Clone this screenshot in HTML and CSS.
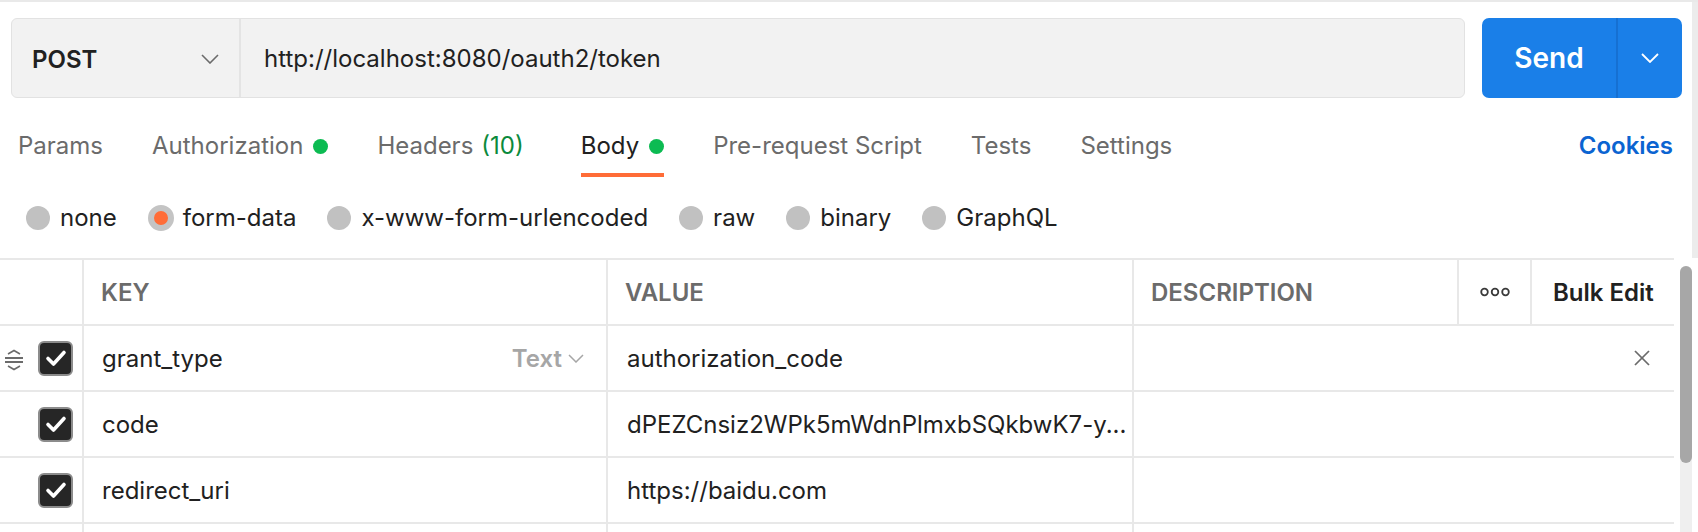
FILE: index.html
```html
<!DOCTYPE html>
<html lang="en">
<head>
<meta charset="utf-8">
<title>POST token request</title>
<link rel="stylesheet" href="styles.css">
</head>
<body>
<div class="page">
  <div class="strip"></div>
  <div class="top">
    <div class="request-row">
      <div class="url-box">
        <div class="method">
          <span class="method-name">POST</span>
          <svg class="chev" width="18" height="10" viewBox="0 0 18 10"><polyline points="1,1 9,9 17,1" fill="none" stroke="#6b6b6b" stroke-width="1.6"/></svg>
        </div>
        <div class="url">http://localhost:8080/oauth2/token</div>
      </div>
      <div class="send">
        <span class="send-label">Send</span>
        <span class="send-drop">
          <svg width="18" height="10" viewBox="0 0 18 10"><polyline points="1,1 9,9 17,1" fill="none" stroke="#ffffff" stroke-width="1.8"/></svg>
        </span>
      </div>
    </div>

    <div class="tabs">
      <div class="tab-list">
        <span class="tab">Params</span>
        <span class="tab">Authorization <i class="dot"></i></span>
        <span class="tab headers">Headers <span class="count">(10)</span></span>
        <span class="tab active">Body <i class="dot"></i></span>
        <span class="tab">Pre-request Script</span>
        <span class="tab">Tests</span>
        <span class="tab">Settings</span>
      </div>
      <span class="cookies">Cookies</span>
    </div>

    <div class="radios">
      <span class="radio-item"><i class="radio"></i>none</span>
      <span class="radio-item"><i class="radio on"></i>form-data</span>
      <span class="radio-item"><i class="radio"></i>x-www-form-urlencoded</span>
      <span class="radio-item"><i class="radio"></i>raw</span>
      <span class="radio-item"><i class="radio"></i>binary</span>
      <span class="radio-item"><i class="radio"></i>GraphQL</span>
    </div>
  </div>

  <div class="table-area">
    <div class="table">
      <div class="row head">
        <div class="cell c-check"></div>
        <div class="cell c-key">KEY</div>
        <div class="cell c-val">VALUE</div>
        <div class="cell c-desc">DESCRIPTION</div>
        <div class="cell c-more">
          <svg width="30" height="10" viewBox="0 0 30 10"><circle cx="4.5" cy="5" r="3.3" fill="none" stroke="#3a3a3a" stroke-width="1.8"/><circle cx="15" cy="5" r="3.3" fill="none" stroke="#3a3a3a" stroke-width="1.8"/><circle cx="25.5" cy="5" r="3.3" fill="none" stroke="#3a3a3a" stroke-width="1.8"/></svg>
        </div>
        <div class="cell c-bulk">Bulk Edit</div>
      </div>

      <div class="row body-row">
        <div class="cell c-check">
          <svg class="drag" width="20" height="22" viewBox="0 0 20 22"><polyline points="4,5 10,1.5 16,5" fill="none" stroke="#6b6b6b" stroke-width="1.6"/><line x1="1" y1="9" x2="19" y2="9" stroke="#6b6b6b" stroke-width="2"/><line x1="1" y1="13" x2="19" y2="13" stroke="#6b6b6b" stroke-width="2"/><polyline points="4,17 10,20.5 16,17" fill="none" stroke="#6b6b6b" stroke-width="1.6"/></svg>
          <span class="checkbox"><svg width="22" height="18" viewBox="0 0 22 18"><polyline points="3,9.5 8.5,15 19,3.5" fill="none" stroke="#ffffff" stroke-width="3.6" stroke-linecap="round" stroke-linejoin="round"/></svg></span>
        </div>
        <div class="cell c-key"><span class="k">grant_type</span><span class="type">Text <svg width="16" height="9" viewBox="0 0 16 9"><polyline points="1,1 8,8 15,1" fill="none" stroke="#a6a6a6" stroke-width="1.5"/></svg></span></div>
        <div class="cell c-val">authorization_code</div>
        <div class="cell c-rest"><svg class="x" width="16" height="16" viewBox="0 0 16 16"><line x1="1" y1="1" x2="15" y2="15" stroke="#6b6b6b" stroke-width="1.7"/><line x1="15" y1="1" x2="1" y2="15" stroke="#6b6b6b" stroke-width="1.7"/></svg></div>
      </div>

      <div class="row body-row">
        <div class="cell c-check">
          <span class="checkbox"><svg width="22" height="18" viewBox="0 0 22 18"><polyline points="3,9.5 8.5,15 19,3.5" fill="none" stroke="#ffffff" stroke-width="3.6" stroke-linecap="round" stroke-linejoin="round"/></svg></span>
        </div>
        <div class="cell c-key"><span class="k">code</span></div>
        <div class="cell c-val">dPEZCnsiz2WPk5mWdnPlmxbSQkbwK7-y...</div>
        <div class="cell c-rest"></div>
      </div>

      <div class="row body-row">
        <div class="cell c-check">
          <span class="checkbox"><svg width="22" height="18" viewBox="0 0 22 18"><polyline points="3,9.5 8.5,15 19,3.5" fill="none" stroke="#ffffff" stroke-width="3.6" stroke-linecap="round" stroke-linejoin="round"/></svg></span>
        </div>
        <div class="cell c-key"><span class="k">redirect_uri</span></div>
        <div class="cell c-val">https://baidu.com</div>
        <div class="cell c-rest"></div>
      </div>

      <div class="row body-row">
        <div class="cell c-check"></div>
        <div class="cell c-key"></div>
        <div class="cell c-val"></div>
        <div class="cell c-rest"></div>
      </div>
    </div>
    <div class="scroll">
      <div class="track"><div class="thumb"></div></div>
    </div>
  </div>
</div>
</body>
</html>
```

FILE: styles.css
```css
* { box-sizing: border-box; }

html, body {
  margin: 0;
  padding: 0;
  background: #ffffff;
  height: 532px;
  overflow: hidden;
}

body {
  font-family: Inter, "Noto Sans", "Liberation Sans", sans-serif;
  font-size: 24px;
  color: #212121;
}

.page {
  width: 1698px;
  display: flex;
  flex-direction: column;
}

.strip {
  height: 2px;
  background: #e9e9e9;
}

.top {
  border-right: 6px solid #ececec;
  height: 256px;
}

/* request bar */
.request-row {
  display: flex;
  gap: 17px;
  padding: 16px 10px 0 11px;
}

.url-box {
  flex: 1;
  height: 80px;
  display: flex;
  align-items: center;
  background: #f2f2f2;
  border: 1px solid #e2e2e2;
  border-radius: 6px;
}

.method {
  width: 229px;
  height: 100%;
  display: flex;
  align-items: center;
  justify-content: space-between;
  padding: 2px 20px 0 20px;
  border-right: 2px solid #e4e4e4;
}

.method-name {
  font-weight: 600;
  color: #212121;
}

.url {
  padding-left: 23px;
  padding-top: 1px;
  color: #212121;
}

.send {
  width: 200px;
  height: 80px;
  display: flex;
  background: #1a7fe8;
  border-radius: 7px;
  color: #ffffff;
}

.send-label {
  flex: 1;
  display: flex;
  align-items: center;
  justify-content: center;
  font-size: 28px;
  font-weight: 600;
  border-right: 2px solid #1670d2;
}

.send-drop {
  width: 64px;
  display: flex;
  align-items: center;
  justify-content: center;
}

/* tabs */
.tabs {
  display: flex;
  justify-content: space-between;
  align-items: flex-start;
  margin-top: 33px;
  padding: 0 19px 0 18px;
}

.tab-list {
  display: flex;
  gap: 49px;
}

.tab {
  display: flex;
  align-items: center;
  gap: 10px;
  height: 46px;
  line-height: 30px;
  padding-bottom: 12px;
  border-bottom: 4px solid transparent;
  color: #6b6b6b;
  white-space: nowrap;
}

.tab.headers {
  margin-right: 8px;
}

.tab.active {
  color: #212121;
  border-bottom-color: #ff6c37;
}

.dot {
  display: inline-block;
  width: 15px;
  height: 15px;
  border-radius: 50%;
  background: #0cbb52;
}

.count {
  color: #0b8a3c;
  margin-left: -2px;
}

.cookies {
  line-height: 30px;
  font-weight: 600;
  color: #0b64d1;
}

/* radios */
.radios {
  display: flex;
  gap: 31px;
  margin-top: 26px;
  padding-left: 26px;
}

.radio-item {
  display: flex;
  align-items: center;
  gap: 10px;
  line-height: 30px;
  color: #212121;
}

.radio {
  display: inline-block;
  width: 24px;
  height: 24px;
  border-radius: 50%;
  background: #c1c1c1;
}

.radio.on {
  width: 26px;
  height: 26px;
  background: #ff6c37;
  border: 6px solid #c4c4c4;
  margin-right: -1px;
}

/* table */
.table-area {
  display: flex;
}

.table {
  width: 1674px;
  border-top: 2px solid #e8e8e8;
}

.row {
  display: grid;
  height: 66px;
  border-bottom: 2px solid #e8e8e8;
}

.row.head {
  grid-template-columns: 84px 524px 526px 325px 73px 142px;
}

.row.body-row {
  grid-template-columns: 84px 524px 526px 540px;
}

.cell {
  display: flex;
  align-items: center;
  border-right: 2px solid #e8e8e8;
  padding-left: 17px;
  white-space: nowrap;
  overflow: hidden;
}

.row .cell:last-child {
  border-right: none;
}

.head .cell {
  font-size: 24px;
  font-weight: 600;
  color: #6b6b6b;
}

.head .c-more {
  padding-left: 0;
  justify-content: center;
}

.head .c-bulk {
  padding-left: 21px;
  font-size: 24px;
  color: #212121;
}

.c-check {
  padding-left: 0;
  position: relative;
}

.drag {
  position: absolute;
  left: 4px;
  top: 23px;
}

.checkbox {
  margin-left: 38px;
  width: 35px;
  height: 35px;
  border-radius: 6px;
  background: #262626;
  border: 2px solid #8c8c8c;
  display: flex;
  align-items: center;
  justify-content: center;
}

.body-row .c-key {
  padding-left: 18px;
  padding-right: 22px;
  justify-content: space-between;
}

.type {
  display: flex;
  align-items: center;
  gap: 6px;
  color: #a6a6a6;
  font-weight: 600;
}

.body-row .c-val {
  padding-left: 19px;
}

.c-rest {
  justify-content: flex-end;
  padding-right: 24px;
}

/* scrollbar */
.scroll {
  width: 24px;
  padding: 8px 6px 0 6px;
}

.track {
  width: 12px;
  height: 300px;
  border-radius: 6px;
  background: #efefef;
}

.thumb {
  width: 12px;
  height: 197px;
  border-radius: 6px;
  background: #a7a7a7;
}
```
